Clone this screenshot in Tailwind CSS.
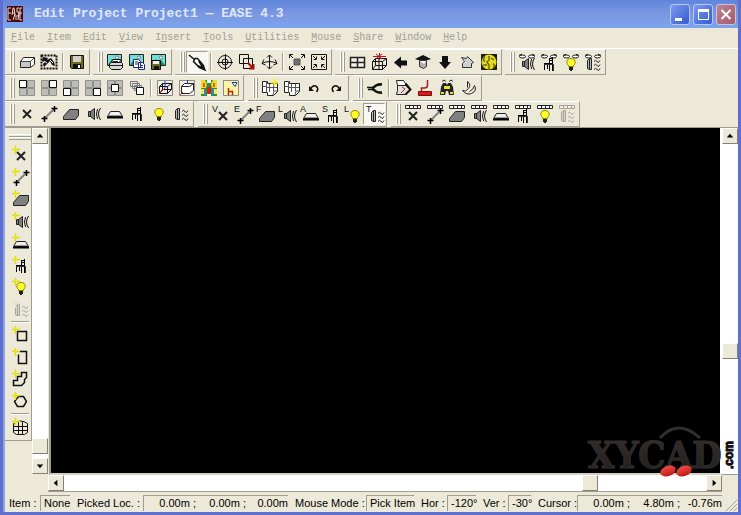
<!DOCTYPE html>
<html lang="en">
<head>
    <meta charset="UTF-8">
    <meta name="viewport" content="width=device-width, initial-scale=1.0">
    <title>Edit Project Project1 - EASE 4.3</title>
    <script src="https://cdn.jsdelivr.net/npm/@tailwindcss/browser@4"></script>
</head>
<body class="flex h-screen flex-col overflow-hidden border-x-[3px] border-b-[3px] border-[#5f6fd0] bg-[#ece9d8] font-['Liberation_Sans',sans-serif] text-[11px] leading-4 text-black">

    <!-- Icons, all on a 20x20 grid -->
    <svg class="hidden">
        <!-- drawing items -->
        <symbol id="x" viewBox="0 0 20 20"><path d="M6 6l8 8M14 6l-8 8" stroke="#222" stroke-width="2" fill="none"/></symbol>
        <symbol id="wire" viewBox="0 0 20 20"><path d="M5 15L15 5" stroke="#808080" stroke-width="2"/><path d="M15.500 2v6M12.500 4.500h6M5.500 12v6M2.500 14.500h6" stroke="#000" stroke-width="1.500"/></symbol>
        <symbol id="face" viewBox="0 0 20 20"><path d="M2.500 12.500L8.500 5.500H17.500V11.500L14.500 15.500H2.500Z" fill="#808080" stroke="#222"/></symbol>
        <symbol id="speaker" viewBox="0 0 20 20"><path d="M5.500 7.500h2v5h-2zM7.500 7.500L11.500 4.500v11L7.500 12.500z" fill="#808080" stroke="#222"/><path d="M14.500 5q-2 5 0 10M17.500 4q-4 6 0 12" fill="none" stroke="#111"/></symbol>
        <symbol id="area" viewBox="0 0 20 20"><path d="M5.500 7.500h9l3 5h-15z" fill="#f0f0f0" stroke="#222"/><path d="M2 13.500h16" stroke="#000" stroke-width="2"/><path d="M4 11.500h12" stroke="#999"/></symbol>
        <symbol id="chair" viewBox="0 0 20 20"><path d="M13.500 3v14M10.500 4.500h3M10.500 4v13M5 9.500h9M5.500 9v7M8.500 10v5M10 6.500h4" stroke="#000" fill="none"/><path d="M5 10.500h9M14.500 10v7" stroke="#333"/></symbol>
        <symbol id="lamp" viewBox="0 0 20 20"><path d="M10 4.500c5 0 5 5 2.500 7v1h-5v-1C5 9.500 5 4.500 10 4.500z" fill="#ffff28" stroke="#8a8400"/><path d="M8 13h4v3h-1v1H9v-1H8z" fill="#222"/></symbol>
        <symbol id="wave" viewBox="0 0 20 20"><path d="M4.500 6.500l2-2h2v11h-2l-2-1zM6.500 5v11" fill="#b8b8b8" stroke="#222"/><path d="M11 7.500q1.500-2.500 3 0t3-1M11 11.500q1.500-2.500 3 0t3-1M11 15.500q1.500-2.500 3 0t3-1" fill="none" stroke="#222"/></symbol>
        <!-- modifiers laid over an item -->
        <symbol id="star" viewBox="0 0 20 20"><path d="M5.500 1v8M2 4.500h8" stroke="#dedb10" stroke-width="1.500"/><path d="M4 3l3 3M7 3L4 6" stroke="#f4f040"/></symbol>
        <symbol id="rail" viewBox="0 0 20 20"><path d="M2.500 1.500h15v3h-15z" fill="#fff" stroke="#222"/><path d="M6.500 2v2M10.500 2v2M14.500 2v2" stroke="#222"/></symbol>
        <symbol id="eyes" viewBox="0 0 20 20"><g fill="#fff" stroke="#111"><ellipse cx="5.500" cy="4.500" rx="3" ry="1.500"/><ellipse cx="14.500" cy="4.500" rx="3" ry="1.500"/></g><path d="M2 3.500q1-1 3-1M18 3.500q-1-1-3-1" stroke="#111" fill="none"/></symbol>
        <!-- file -->
        <symbol id="open" viewBox="0 0 20 20"><path d="M3.500 9.500l3-4h11v7l-4 3h-10z" fill="#fff" stroke="#222"/><path d="M4 10h9v5H4z" fill="#c8c8c8"/><path d="M3 9.500h10.500v6M13.500 9.500l4-4" fill="none" stroke="#444"/></symbol>
        <symbol id="select" viewBox="0 0 20 20"><path d="M2.500 3.500h15v13h-15z" fill="none" stroke="#111" stroke-width="2" stroke-dasharray="2 1"/><path d="M4 5l5 1-1 2 4-2 3 4 1 4-3-1-2-4-3 3-3 3-1-3 2-2-3-1z" fill="#111"/><path d="M5 9l3 2M11 8l3 3" stroke="#fff"/></symbol>
        <symbol id="save" viewBox="0 0 20 20"><path d="M3.500 3.500h13v13h-12l-1-1z" fill="#6b6b28" stroke="#111"/><path d="M6 4h8v6H6z" fill="#d0d0c8"/><path d="M6 12h8v5H6z" fill="#111"/><path d="M11 13h2v3h-2z" fill="#fff"/></symbol>
        <symbol id="photo" viewBox="0 0 20 20"><path d="M2.500 2.500h14v11h-14z" fill="#70e0d8" stroke="#222"/><path d="M3 13l4-6 3 3 2-2 4 5z" fill="#129068"/><circle cx="12" cy="5.500" r="1.500" fill="#fff" stroke="#222" stroke-width=".500"/></symbol>
        <symbol id="printer" viewBox="0 0 20 20"><path d="M7.500 7.500h8l-1 4h-8z" fill="#fff" stroke="#111"/><path d="M4.500 11.500l2-1h10l1 1v4l-2 2h-9l-2-2z" fill="#d8d8d8" stroke="#111"/><path d="M5 13.500h12M8 9.500h5" stroke="#222"/></symbol>
        <symbol id="copies" viewBox="0 0 20 20"><path d="M6.500 7.500h5l2 2v6h-7zM11.500 10.500h4l2 2v5h-6z" fill="#fff" stroke="#202878"/><path d="M8 10h3M8 12h3M13 13.500h3M13 15.500h3" stroke="#202878"/></symbol>
        <symbol id="disk" viewBox="0 0 20 20"><path d="M2.500 8.500h9v9h-9z" fill="#6b6b28" stroke="#111"/><path d="M4 9h6v3H4z" fill="#eee"/><path d="M5 14h5v3H5z" fill="#111"/></symbol>
        <!-- view -->
        <symbol id="pen" viewBox="0 0 20 20"><path d="M2 3l6 5" stroke="#111" stroke-width="1.500"/><path d="M8 6.500l2.500 0 6 7 1 4-5-2-6-6z" fill="#fff" stroke="#111" stroke-width="1.500"/><path d="M12 9l5 8-6-3" stroke="#111" stroke-width="2" fill="none"/></symbol>
        <symbol id="target" viewBox="0 0 20 20"><circle cx="10" cy="10" r="6.500" fill="none" stroke="#111"/><circle cx="10" cy="10" r="3" fill="none" stroke="#111"/><path d="M10.500 2v16M2 10.500h16" stroke="#111"/></symbol>
        <symbol id="zoombox" viewBox="0 0 20 20"><path d="M2.500 2.500h9v9h-9zM6.500 6.500h9v10h-9z" fill="none" stroke="#111"/><path d="M11 11l5 5M16.500 12v4.500H12" stroke="#a01010" stroke-width="2" fill="none"/></symbol>
        <symbol id="move" viewBox="0 0 20 20"><path d="M10.500 3v14M3 11.500q7.500-4 15 0M8 5.500L10.500 3l2.500 2.500M8 14.500l2.500 2.500 2.500-2.500M5 7.500l-2 4L6.500 13M16 7.500l2 4L14.500 13" fill="none" stroke="#111"/></symbol>
        <symbol id="expand" viewBox="0 0 20 20"><path d="M7 7h6v6H7z" fill="#707070" stroke="#555"/><path d="M2.500 6V2.500H6M14 2.500h3.500V6M17.500 14v3.500H14M6 17.500H2.500V14M3 3l3 3M17 3l-3 3M17 17l-3-3M3 17l3-3" fill="none" stroke="#111"/></symbol>
        <symbol id="shrink" viewBox="0 0 20 20"><path d="M2.500 2.500h15v15h-15z" fill="none" stroke="#111"/><path d="M4.500 7.500h3v-3M12.500 4.500v3h3M15.500 12.500h-3v3M7.500 15.500v-3h-3M4 4l3 3M16 4l-3 3M16 16l-3-3M4 16l3-3" fill="none" stroke="#111"/></symbol>
        <symbol id="panes" viewBox="0 0 20 20"><path d="M3.500 5.500h14v10h-14zM3 10.500h15M10.500 5v11" fill="#f4f2e8" stroke="#222" stroke-width="1.500"/></symbol>
        <symbol id="cubered" viewBox="0 0 20 20"><path d="M3.500 9.500h10v8h-10zM3.500 9.500l3-3h11l-4 3M17.500 6.500v7l-4 4M6.500 6.500v7M6.500 13.500h11M3.500 17.500l3-4M10 7v10" fill="none" stroke="#111"/><path d="M4 4.500h13M10.500 1v7M7 2l6 5M13 2L8 6" stroke="#b01818"/></symbol>
        <symbol id="left" viewBox="0 0 20 20"><path d="M3 10.500l7-6v4h6v5h-6v3z" fill="#111"/></symbol>
        <symbol id="cap" viewBox="0 0 20 20"><path d="M2 7l8-4 8 4-3 1-5 1-5-1z" fill="#111"/><path d="M6.500 8.500h7v6l-3 2-4-2z" fill="#b0b0b0" stroke="#333"/><path d="M7 9h6l-2 3z" fill="#fff"/></symbol>
        <symbol id="down" viewBox="0 0 20 20"><path d="M7 4h6v6h3l-6 7-6-7h3z" fill="#111"/></symbol>
        <symbol id="house" viewBox="0 0 20 20"><path d="M4.500 5.500l5 1 1-2 6 6-2 1v4h-9v-4l2-2z" fill="#d0d0d0" stroke="#333"/></symbol>
        <symbol id="globe" viewBox="0 0 20 20"><path d="M2 2h16v16H2z" fill="#202010"/><circle cx="10" cy="10" r="7.500" fill="#e4dc20"/><path d="M10 4v4l-2 2 2 3v4M6 4.500q-3 4 0 5M14 11.500q3 3 0 4M12 6l3 2M4 13h4" stroke="#706a08" fill="none" stroke-width="1.500"/></symbol>
        <!-- window layouts -->
        <symbol id="quad" viewBox="0 0 20 20"><path d="M2.500 2.500h7v7h-7zM10.500 2.500h7v7h-7zM2.500 10.500h7v7h-7zM10.500 10.500h7v7h-7z" fill="#bcbcb8" stroke="#8e8e8a"/></symbol>
        <symbol id="pane" viewBox="0 0 20 20"><path d="M6.500 6.500h7v7h-7z" fill="#fff" stroke="#111"/></symbol>
        <symbol id="stack" viewBox="0 0 20 20"><path d="M3.500 3.500h7v5h-7zM5.500 5.500h7v5h-7zM7.500 7.500h7v5h-7z" fill="#e8e6dc" stroke="#777"/><path d="M9.500 9.500h7v7h-7z" fill="#fff" stroke="#111"/></symbol>
        <symbol id="frame" viewBox="0 0 20 20"><path d="M2.500 2.500h15v15h-15z" fill="#f1efe5" stroke="#8a8a86"/></symbol>
        <symbol id="cube" viewBox="0 0 20 20"><path d="M4.500 8.500h8v7h-8zM4.500 8.500l3-3h9l-4 3M16.500 5.500v6l-4 4M7.500 5.500v6h9M4.500 15.500l3-4" fill="none" stroke="#111"/><path d="M10 3v7" stroke="#2038c0"/><path d="M4 16l6-6" stroke="#c02020"/></symbol>
        <symbol id="solid" viewBox="0 0 20 20"><path d="M4.500 8.500l3-3h9v7l-4 3h-8zM4.500 8.500h8M12.500 8.500l4-3" fill="#fff" stroke="#222"/><path d="M10.500 2v4" stroke="#2038c0"/><path d="M3 17l3-3" stroke="#c02020"/></symbol>
        <symbol id="map" viewBox="0 0 20 20"><path d="M2 2h16v16H2z" fill="#289038"/><path d="M2 2h4l2 4-1 4H2zM18 2h-4l-2 4 1 4h5z" fill="#f0dc28"/><path d="M2 11h3v5H2zM18 11h-3v5h3z" fill="#f4e850"/><path d="M5 11h2v6H5zM13 11h2v6h-2z" fill="#3888c0"/><path d="M8 9h4v6l-2 2-2-2z" fill="#dc2018"/><path d="M8 2h4v3H8zM8 16h4v2H8z" fill="#fff"/><path d="M4 5h2v4H4zM14 5h2v4h-2z" fill="#e06018"/></symbol>
        <symbol id="ray" viewBox="0 0 20 20"><path d="M2.500 2.500h15v15h-15z" fill="#fcf4a0" stroke="#8a8a86"/><path d="M7.500 17v-7M7.500 13.500h4V17" stroke="#b02818" fill="none" stroke-width="1.500"/><path d="M11 4.500h5l-2 4z" fill="#fff" stroke="#2030c0"/></symbol>
        <!-- edit -->
        <symbol id="pages" viewBox="0 0 20 20"><path d="M2.500 3.500h5v2h10v8l-4 4h-6v-3h-5z" fill="#fff" stroke="#222"/><path d="M6.500 3v12M2.500 8.500h4M9.500 6v8M13 17l1-4h3M13.500 6v7M7 9.500h10" stroke="#555" fill="none"/></symbol>
        <symbol id="spark" viewBox="0 0 20 20"><path d="M14.500 1v7M11 4.500h7" stroke="#f2ee20" stroke-width="2"/></symbol>
        <symbol id="undo" viewBox="0 0 20 20"><path d="M6.500 11q2-4 5-3 4 2 1 6" fill="none" stroke="#111" stroke-width="1.500"/><path d="M5 8v5h5z" fill="#111"/></symbol>
        <symbol id="redo" viewBox="0 0 20 20"><path d="M13.500 11q-2-4-5-3-4 2-1 6" fill="none" stroke="#111" stroke-width="1.500"/><path d="M15 8v5h-5z" fill="#111"/></symbol>
        <symbol id="pliers" viewBox="0 0 20 20"><path d="M2 9.500h6M3 11.500h5" stroke="#111" stroke-width="1.500"/><path d="M7 10.500l4-3q3-1.500 6-1M7 10.500l4 3q3 1.500 6 1" fill="none" stroke="#111" stroke-width="2.500"/></symbol>
        <symbol id="report" viewBox="0 0 20 20"><path d="M3.500 2.500h7l2 3v2h-8z" fill="#fff" stroke="#222"/><path d="M4.500 7.500h8l5 4-5 5h-9l1-4z" fill="#e0e0e0" stroke="#222"/><path d="M12.500 5.500l5 6-5 5" fill="none" stroke="#111" stroke-width="2"/><path d="M9 9l3 2-4 4" stroke="#c02828" fill="none"/></symbol>
        <symbol id="paint" viewBox="0 0 20 20"><path d="M12.500 2v5q0 3-3 3h-3v3" fill="none" stroke="#a81818" stroke-width="1.500"/><path d="M3.500 13.500h13v4h-13z" fill="#d81818" stroke="#801010"/></symbol>
        <symbol id="walk" viewBox="0 0 20 20"><path d="M4 9l2-4h3l1 2 1-2h3l2 4 1 8h-5l-1-4H9l-1 4H3z" fill="#222"/><path d="M5 3.500q2-3 4 0M12 3.500q2-3 4 0" stroke="#222" fill="none"/><path d="M7 8h6v3H7z" fill="#e8e020"/><path d="M4 14h3v2H4zM13 14h3v2h-3z" fill="#e8e020"/></symbol>
        <symbol id="swirl" viewBox="0 0 20 20"><path d="M8.500 3.500q4 3 1 7t-6 2q4 5 9 3 6-3 3-8-1 4-5 6M8.500 3.500v6" fill="none" stroke="#222"/></symbol>
        <!-- shapes -->
        <symbol id="square" viewBox="0 0 20 20"><path d="M7.500 6.500h9v9h-9z" fill="none" stroke="#111" stroke-width="1.500"/></symbol>
        <symbol id="prism" viewBox="0 0 20 20"><path d="M9.500 4.500h7v12h-8v-9" fill="none" stroke="#111" stroke-width="1.500"/></symbol>
        <symbol id="stairs" viewBox="0 0 20 20"><path d="M3.500 11.500h4v-4h4v-4h5v5l-2 2v3l-3 3h-8z" fill="none" stroke="#111" stroke-width="1.500"/></symbol>
        <symbol id="hex" viewBox="0 0 20 20"><path d="M8.500 5.500h5l3 5-3 5h-6l-3-5z" fill="none" stroke="#111" stroke-width="1.500"/></symbol>
        <symbol id="dome" viewBox="0 0 20 20"><path d="M3.500 6.500q7-5 14 0v9l-3 2h-8l-3-2zM3.500 9.500h14M3.500 13.500h14M8.500 4v13M12.500 4v13" fill="none" stroke="#111"/></symbol>
    </svg>

    <header class="-mx-[3px] flex h-7 shrink-0 items-center gap-[10px] bg-linear-to-b from-[#5f86dc] via-[#7c97e0] to-[#7aa4f0] pr-[5px] pl-[6px]">
        <svg class="size-[18px]" viewBox="0 0 18 18">
            <path d="M1 1h16v16H1z" fill="#4a0808"/>
            <path d="M5 3H2v12h3M2 8h3M6 10l1-7h1l1 7M6 8h3M13 3h-2v4h2v4h-2M16 3h-2v12h2M14 8h2M7 15l2-6M10 10v5M12 15l1-7" fill="none" stroke="#e8dcd8"/>
        </svg>
        <h1 class="flex-1 font-['Liberation_Mono',monospace] text-[13px] font-bold text-[#dfe8fb]">Edit Project Project1 — EASE 4.3</h1>
        <div class="flex gap-[3px]">
            <button aria-label="Minimize" class="h-[21px] w-5 rounded-[3px] border border-[#b9c8f2] bg-linear-to-br from-[#7c9cf0] to-[#3758cc]">
                <svg class="size-[18px]" viewBox="0 0 18 18"><path d="M4 13h7v3H4z" fill="#fff"/></svg>
            </button>
            <button aria-label="Maximize" class="h-[21px] w-5 rounded-[3px] border border-[#b9c8f2] bg-linear-to-br from-[#7c9cf0] to-[#3758cc]">
                <svg class="size-[18px]" viewBox="0 0 18 18"><path d="M4.500 4.500h10v10h-10z" fill="none" stroke="#fff"/><path d="M4 5.500h11" stroke="#fff" stroke-width="3"/></svg>
            </button>
            <button aria-label="Close" class="h-[21px] w-5 rounded-[3px] border border-[#d0c0d8] bg-linear-to-br from-[#bd8494] to-[#a25a6c]">
                <svg class="size-[18px]" viewBox="0 0 18 18"><path d="M4.500 5l9 9M13.500 5l-9 9" stroke="#fff" stroke-width="2"/></svg>
            </button>
        </div>
    </header>

    <div class="flex min-h-0 flex-1 flex-col border-l-2 border-[#8fa4e6]">
        <nav class="flex h-[21px] shrink-0 items-center gap-3 border-b border-white px-[6px] font-['Liberation_Mono',monospace] text-[10px] text-[#a29f92]">
            <button><u>F</u>ile</button>
            <button><u>I</u>tem</button>
            <button><u>E</u>dit</button>
            <button><u>V</u>iew</button>
            <button>I<u>n</u>sert</button>
            <button><u>T</u>ools</button>
            <button><u>U</u>tilities</button>
            <button><u>M</u>ouse</button>
            <button><u>S</u>hare</button>
            <button><u>W</u>indow</button>
            <button><u>H</u>elp</button>
        </nav>

        <div class="flex h-[26px] shrink-0 gap-[3px]">
            <div data-tools="open select | save"></div>
            <div data-tools="photo+printer photo+copies photo+disk"></div>
            <div data-tools="*pen | target zoombox move | expand shrink"></div>
            <div data-tools="panes cubered left cap down house globe"></div>
            <div data-tools="eyes+speaker eyes+chair eyes+lamp eyes+wave"></div>
        </div>
        <div class="flex h-[26px] shrink-0 gap-1">
            <div data-tools="quad+pane@-4,-4 quad+pane@4,-4 quad+pane@-4,4 quad+pane@4,4 quad+pane@0,0 stack | frame+cube frame+solid map ray"></div>
            <div data-tools="pages+spark pages undo redo"></div>
            <div data-tools="pliers | report paint walk swirl"></div>
        </div>
        <div class="flex h-[26px] shrink-0 gap-1">
            <div data-tools="x wire face speaker area chair lamp wave"></div>
            <div data-tools="V:x E:wire F:face L:speaker A:area S:chair L:lamp *T:wave"></div>
            <div data-tools="rail+x rail+wire rail+face rail+speaker rail+area rail+chair rail+lamp -rail+wave"></div>
        </div>

        <main class="flex min-h-0 flex-1 border-t border-[#a09d90]">
            <div class="w-[27px] shrink-0">
                <div data-tools="x+star wire+star face+star speaker+star area+star chair+star lamp+star -wave+star | square+star prism+star stairs+star hex+star | dome+star" data-vertical></div>
            </div>

            <div class="flex w-4 shrink-0 flex-col bg-white" role="scrollbar" aria-label="Zoom" aria-valuenow="95">
                <button data-arrow="M4 9h7L7.500 5z" aria-label="Up"></button>
                <div class="flex-1"></div>
                <div data-thumb></div>
                <div class="h-1"></div>
                <button data-arrow="M4 6h7L7.500 10z" aria-label="Down"></button>
                <div class="h-[18px] bg-[#ece9d8]"></div>
            </div>

            <div class="flex min-w-0 flex-1 flex-col">
                <div class="relative ml-px min-h-0 flex-1 border-r-2 border-b-2 border-l-2 border-[#a09d90] border-r-white border-b-[#d4d0c2] bg-black">
                    <!-- watermark over the canvas and the scroll bars -->
                    <svg class="absolute -right-5 -bottom-3 z-10 h-[60px] w-[156px]" viewBox="0 0 156 60">
                        <defs>
                            <linearGradient id="ink" x2="0" y2="1"><stop stop-color="#332f2d"/><stop offset="1" stop-color="#211e1d"/></linearGradient>
                            <linearGradient id="red" x2="0" y2="1"><stop stop-color="#f05040"/><stop offset="1" stop-color="#c01818"/></linearGradient>
                        </defs>
                        <text x="4" y="43" font-family="DejaVu Serif Condensed, DejaVu Serif, serif" font-weight="700" font-size="38" fill="url(#ink)" stroke="#332f2d">XYCAD</text>
                        <path d="M76 13Q94-7 116 13" fill="none" stroke="#332f2d" stroke-width="3"/>
                        <ellipse cx="84" cy="46" rx="8" ry="5" fill="url(#red)" transform="rotate(-20 84 46)"/>
                        <ellipse cx="100" cy="46" rx="8" ry="5" fill="url(#red)" transform="rotate(-20 100 46)"/>
                        <text transform="translate(149 44) rotate(-90)" font-family="Liberation Sans, sans-serif" font-weight="700" font-size="12" fill="#111" stroke="#111">.com</text>
                    </svg>
                </div>
                <div class="flex h-[17px] shrink-0 border-b border-[#a09d90] bg-white" role="scrollbar" aria-label="Horizontal" aria-valuenow="82">
                    <button data-arrow="M9 4v7L5 7.500z" aria-label="Left"></button>
                    <div class="flex-1"></div>
                    <div data-thumb></div>
                    <div class="w-[16%]"></div>
                    <button data-arrow="M6 4v7l4-3.500z" aria-label="Right"></button>
                </div>
            </div>

            <div class="mb-[17px] flex w-4 shrink-0 flex-col border-b border-[#a09d90] bg-white" role="scrollbar" aria-label="Vertical" aria-valuenow="65">
                <button data-arrow="M4 9h7L7.500 5z" aria-label="Up"></button>
                <div class="flex-1"></div>
                <div data-thumb></div>
                <div class="h-1/3"></div>
            </div>
        </main>

        <footer class="flex h-5 shrink-0 items-center pt-px leading-[14px] whitespace-nowrap">
            <span class="w-[35px] pl-1">Item :</span>
            <output class="h-4 w-[30px] border-t border-l border-[#a09d90] pl-[3px]">None</output>
            <span class="w-[73px] pl-[7px]">Picked Loc. :</span>
            <output class="flex h-4 w-[145px] border-t border-l border-[#a09d90]"><span class="w-[52px] text-right">0.00m ;</span><span class="w-[50px] text-right">0.00m ;</span><span class="flex-1 text-right">0.00m</span></output>
            <span class="w-[78px] pl-[7px]">Mouse Mode :</span>
            <output class="h-4 w-[48px] border-t border-l border-[#a09d90] pl-[3px]">Pick Item</output>
            <span class="w-[33px] pl-[7px]">Hor :</span>
            <output class="h-4 w-[29px] border-t border-l border-[#a09d90] pl-[3px]">-120°</output>
            <span class="w-[32px] pl-[7px]">Ver :</span>
            <output class="h-4 w-[23px] border-t border-l border-[#a09d90] pl-[3px]">-30°</output>
            <span class="w-[46px] pl-[7px]">Cursor :</span>
            <output class="flex h-4 w-[145px] border-t border-l border-[#a09d90]"><span class="w-[52px] text-right">0.00m ;</span><span class="w-[50px] text-right">4.80m ;</span><span class="flex-1 text-right">-0.76m</span></output>
            <svg class="ml-auto size-[14px] self-end" viewBox="0 0 14 14"><path d="M2 13L13 2M6 13l7-7M10 13l3-3" stroke="#a09d90"/></svg>
        </footer>
    </div>

    <script>
        // "V:x" = letter + item, "a+b" = stacked icons, "*" = pressed, "-" = disabled, "|" = separator
        function icon(code) {
            let letter = '';
            if (code[1] === ':') {
                letter = `<text x="2" y="8" font-family="Liberation Sans" font-size="9" fill="#111">${code[0]}</text>`;
                code = code.slice(2);
            }
            const parts = code.split('+');
            const body = parts.map(part => {
                const [name, at] = part.split('@');
                let shift = at || '0,0';
                if (letter) shift = '3,2';
                if (/^(eyes|rail)\+/.test(code) && part === parts[1]) shift = '0,2';
                if (/^(x|wire|face|speaker|area|chair|lamp|wave)\+star/.test(code) && part === parts[0]) shift = '1,1';
                return `<use href="#${name}" width="20" height="20" transform="translate(${shift})"/>`;
            }).join('');
            return `<svg class="size-5 overflow-visible" viewBox="0 0 20 20">${body}${letter}</svg>`;
        }

        document.querySelectorAll('[data-tools]').forEach(bar => {
            const vertical = 'vertical' in bar.dataset;
            bar.className = vertical
                ? 'flex flex-col items-center border-r border-b border-r-[#a09d90] border-b-[#a09d90] pt-[6px] pb-[2px] pl-[3px]'
                : 'flex items-center border-t border-r border-b border-t-white border-r-[#a09d90] border-b-[#a09d90] pl-[5px] pr-px';
            const grip = vertical
                ? '<div class="mb-1 h-[6px] w-[22px] border-y border-t-white border-b-[#a09d90] py-px"><div class="h-[2px] border-t border-[#a09d90] bg-white"></div></div>'
                : '<div class="mr-px flex h-5 w-[5px] shrink-0 gap-px"><div class="w-[2px] border-r border-[#a09d90] bg-white"></div><div class="w-[2px] border-r border-[#a09d90] bg-white"></div></div>';
            const sep = vertical
                ? '<div class="my-px h-[2px] w-[18px] border-t border-[#a09d90] bg-white"></div>'
                : '<div class="mx-[2px] h-[18px] w-[2px] border-l border-[#a09d90] bg-white"></div>';
            bar.innerHTML = grip + bar.dataset.tools.split(' ').map(code => {
                if (code === '|') return sep;
                if (code[0] === '*') return `<button class="grid size-[22px] shrink-0 place-items-center border border-t-[#a09d90] border-r-white border-b-white border-l-[#a09d90] bg-[#f8f7f2]">${icon(code.slice(1))}</button>`;
                if (code[0] === '-') return `<button disabled class="grid size-[22px] shrink-0 place-items-center opacity-35 grayscale">${icon(code.slice(1))}</button>`;
                return `<button class="grid size-[22px] shrink-0 place-items-center">${icon(code)}</button>`;
            }).join('');
        });

        document.querySelectorAll('[data-arrow]').forEach(btn => {
            btn.className = 'size-4 shrink-0 border border-t-white border-r-[#858275] border-b-[#858275] border-l-white bg-[#ece9d8]';
            btn.innerHTML = `<svg class="size-[14px]" viewBox="0 0 15 15"><path d="${btn.dataset.arrow}"/></svg>`;
        });
        document.querySelectorAll('[data-thumb]').forEach(thumb => {
            thumb.className = 'size-4 shrink-0 border border-t-white border-r-[#858275] border-b-[#858275] border-l-white bg-[#ece9d8]';
        });
    </script>
</body>
</html>
